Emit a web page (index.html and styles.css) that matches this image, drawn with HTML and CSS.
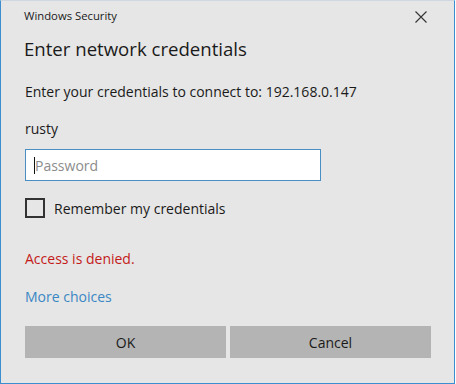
FILE: index.html
```html
<!DOCTYPE html>
<html lang="en">
<head>
  <meta charset="UTF-8" />
  <meta name="viewport" content="width=device-width, initial-scale=1" />
  <title>Windows Security</title>
  <link rel="stylesheet" href="styles.css">
</head>
<body>

  <div class="dialog">
    <div class="titlebar">
      <span class="app-name">Windows Security</span>
      <span class="close-btn">
        <svg width="12" height="12" viewBox="0 0 12 12">
          <path d="M0.5 0.5 L11.5 11.5 M11.5 0.5 L0.5 11.5" stroke="#333" stroke-width="1.1" fill="none"/>
        </svg>
      </span>
    </div>

    <h1>Enter network credentials</h1>

    <p class="message">Enter your credentials to connect to: 192.168.0.147</p>
    <p class="user">rusty</p>

    <div class="field">
      <span class="caret"></span>
      <span class="placeholder">Password</span>
    </div>

    <label class="remember">
      <span class="checkbox"></span>
      <span>Remember my credentials</span>
    </label>

    <p class="error">Access is denied.</p>
    <a class="more" href="#">More choices</a>

    <div class="buttons">
      <button class="btn">OK</button>
      <button class="btn">Cancel</button>
    </div>
  </div>

</body>
</html>
```

FILE: styles.css
```css
body {
  margin: 0;
  background: #fff;
  font-family: "Open Sans", "Noto Sans", sans-serif;
  color: #1a1a1a;
}

.dialog {
  width: 455px;
  height: 384px;
  box-sizing: border-box;
  background: #e6e6e6;
  border: 1px solid #3b8ed0;
  border-top-color: #cfd8e0;
  padding: 0 23px 0 22px;
}

.titlebar {
  display: flex;
  justify-content: space-between;
  align-items: center;
  height: 32px;
}

.app-name {
  font-size: 11.3px;
  line-height: 16px;
  margin: -2px 0 0 1px;
}

.close-btn {
  display: flex;
  margin-right: 4px;
  margin-top: -1px;
}

h1 {
  font-size: 18.6px;
  font-weight: normal;
  line-height: 28px;
  margin: 2px 0 0 1px;
}

.message {
  font-size: 14px;
  line-height: 20px;
  margin: 19px 0 0 2px;
}

.user {
  font-size: 14px;
  line-height: 20px;
  margin: 17px 0 0 2px;
}

.field {
  display: flex;
  align-items: center;
  width: 296px;
  height: 32px;
  box-sizing: border-box;
  margin: 10px 0 0 2px;
  background: #fff;
  border: 1px solid #4a8fc4;
  padding-left: 8px;
}

.caret {
  width: 1px;
  height: 17px;
  background: #111;
}

.placeholder {
  font-size: 14px;
  color: #8c8c8c;
}

.remember {
  display: flex;
  align-items: center;
  gap: 9px;
  margin: 17px 0 0 2px;
  font-size: 14px;
}

.checkbox {
  width: 20px;
  height: 20px;
  box-sizing: border-box;
  border: 2px solid #333;
}

.error {
  font-size: 14px;
  line-height: 20px;
  color: #c41a1a;
  margin: 31px 0 0 2px;
}

.more {
  display: block;
  font-size: 14px;
  line-height: 20px;
  color: #3a87c4;
  text-decoration: none;
  margin: 18px 0 0 2px;
}

.buttons {
  display: flex;
  gap: 4px;
  margin: 19px 0 0 2px;
}

.btn {
  width: 201px;
  height: 32px;
  border: none;
  background: #b4b4b4;
  font-family: inherit;
  font-size: 14px;
  color: #1a1a1a;
}
```
